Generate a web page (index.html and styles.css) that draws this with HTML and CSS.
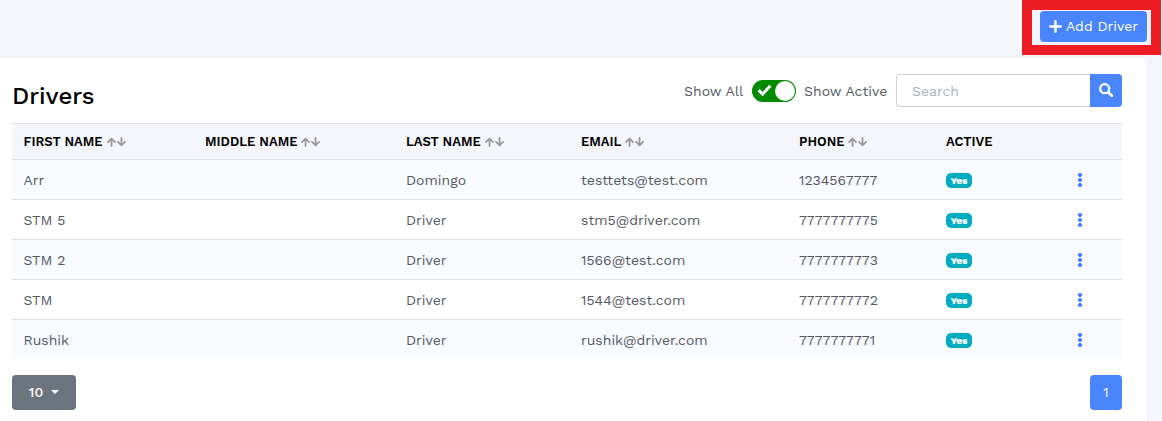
FILE: index.html
```html
<!DOCTYPE html>
<html lang="en">
<head>
<meta charset="utf-8">
<title>Drivers</title>
<link rel="stylesheet" href="styles.css">
</head>
<body>
<svg class="sprite" aria-hidden="true">
  <symbol id="sort" viewBox="0 0 20 10"><path d="M4.500 9V2M1 5.200 4.500 1.700 8 5.200M14.500 1v7M11 4.800l3.500 3.500L18 4.800" fill="none" stroke="#999" stroke-width="1.800" stroke-linecap="round" stroke-linejoin="round"/></symbol>
  <symbol id="dots" viewBox="0 0 4 14"><circle cx="2" cy="2" r="2.100"/><circle cx="2" cy="7" r="2.100"/><circle cx="2" cy="12" r="2.100"/></symbol>
</svg>
<header class="topbar">
  <div class="highlight">
    <button class="add-btn"><svg class="plus" viewBox="0 0 13 13"><path d="M6.500 1.200v10.600M1.200 6.500h10.600" stroke="#fff" stroke-width="2.400" stroke-linecap="round"/></svg><span>Add Driver</span></button>
  </div>
</header>
<main class="card">
  <div class="toolbar">
    <h1>Drivers</h1>
    <div class="controls">
      <span class="show-all">Show All</span>
      <span class="toggle"><svg class="check" viewBox="0 0 14 12"><path d="M1.500 5.700 5.200 9.300 12.500 1.500" fill="none" stroke="#fff" stroke-width="2.800"/></svg><span class="knob"></span></span>
      <span class="show-active">Show Active</span>
      <div class="search">
        <div class="search-input">Search</div>
        <button class="search-btn"><svg class="lens" viewBox="0 0 14 14"><circle cx="5.700" cy="5.700" r="4.500" fill="none" stroke="#fff" stroke-width="2.300"/><path d="m9.200 9.200 3.600 3.600" stroke="#fff" stroke-width="2.700" stroke-linecap="round"/></svg></button>
      </div>
    </div>
  </div>
  <div class="table">
    <div class="row head"><span>FIRST NAME<svg class="sort"><use href="#sort"/></svg></span><span>MIDDLE NAME<svg class="sort"><use href="#sort"/></svg></span><span>LAST NAME<svg class="sort"><use href="#sort"/></svg></span><span>EMAIL<svg class="sort"><use href="#sort"/></svg></span><span>PHONE<svg class="sort"><use href="#sort"/></svg></span><span>ACTIVE</span><span></span></div>
    <div class="row"><span>Arr</span><span></span><span>Domingo</span><span>testtets@test.com</span><span>1234567777</span><span><b class="badge">Yes</b></span><span><svg class="dots"><use href="#dots"/></svg></span></div>
    <div class="row"><span>STM 5</span><span></span><span>Driver</span><span>stm5@driver.com</span><span>7777777775</span><span><b class="badge">Yes</b></span><span><svg class="dots"><use href="#dots"/></svg></span></div>
    <div class="row"><span>STM 2</span><span></span><span>Driver</span><span>1566@test.com</span><span>7777777773</span><span><b class="badge">Yes</b></span><span><svg class="dots"><use href="#dots"/></svg></span></div>
    <div class="row"><span>STM</span><span></span><span>Driver</span><span>1544@test.com</span><span>7777777772</span><span><b class="badge">Yes</b></span><span><svg class="dots"><use href="#dots"/></svg></span></div>
    <div class="row"><span>Rushik</span><span></span><span>Driver</span><span>rushik@driver.com</span><span>7777777771</span><span><b class="badge">Yes</b></span><span><svg class="dots"><use href="#dots"/></svg></span></div>
  </div>
  <div class="footer">
    <button class="size-btn">10<span class="caret"></span></button>
    <button class="page-btn">1</button>
  </div>
</main>
</body>
</html>
```
FILE: styles.css
```css
* { box-sizing: border-box; }
body { margin: 0; height: 421px; overflow: hidden; background: #f5f6fb; color: #54595f; font: 400 14px/20px "Work Sans", Inter, sans-serif; }
button { border: 0; padding: 0 0 2px; margin: 0; font: inherit; color: #fff; display: flex; align-items: center; justify-content: center; }
.sprite { position: absolute; width: 0; height: 0; }
.topbar { height: 58px; padding-right: 1px; display: flex; justify-content: flex-end; align-items: flex-start; }
.highlight { width: 139px; height: 55px; border: 10px solid #ed1c24; padding: 1px 4px 0 8px; }
.add-btn { width: 107px; height: 31px; padding-bottom: 1px; border-radius: 4px; background: #4885ff; gap: 4px; }
.plus { width: 13px; height: 13px; }
.card { width: 1147px; height: 363px; padding: 16px 25px 0 12px; background: #fff; border-radius: 0 5px 0 0; box-shadow: 0 0 4px rgba(40, 50, 90, .04); }
.toolbar { height: 49px; display: flex; justify-content: space-between; align-items: flex-start; }
h1 { margin: 7px 0 0; font-size: 24px; line-height: 30px; font-weight: 500; color: #000; }
.controls { display: flex; align-items: center; height: 33px; }
.show-all { width: 68px; white-space: nowrap; }
.show-active { width: 92px; white-space: nowrap; }
.toggle { width: 44px; height: 22px; margin-right: 8px; padding: 0 1px 0 5px; border-radius: 11px; background: #008a00; display: flex; align-items: center; justify-content: space-between; }
.check { width: 15px; height: 13px; }
.knob { width: 20px; height: 20px; border-radius: 50%; background: #fff; }
.search { display: flex; width: 226px; height: 33px; }
.search-input { flex: 1; padding: 6px 15px; line-height: 20px; border: 1px solid #cfd2da; border-right: 0; border-radius: 4px 0 0 4px; color: #adb3ba; }
.search-btn { width: 32px; background: #4885ff; border-radius: 0 4px 4px 0; }
.lens { width: 14px; height: 14px; }
.table { width: 1110px; }
.row { display: grid; grid-template-columns: 182px 201px 175px 218px 147px 132px 55px; height: 40px; padding-top: 1px; border-top: 1px solid #dee2e6; align-items: center; }
.row > span { padding-left: 11px; display: flex; align-items: center; white-space: nowrap; }
.row > span:first-child { padding-left: 11.5px; }
.row:nth-child(even) { background: #f9fbff; }
.head { height: 36px; padding-top: 0; background: #f5f6fb; color: #000; font-weight: 600; font-size: 13px; }
.sort { width: 20px; height: 10px; margin-left: 4px; }
.badge { width: 26px; height: 15px; border-radius: 5px; background: #00acc1; color: #fff; font-size: 10px; line-height: 15px; font-weight: 800; text-align: center; }
.dots { width: 4px; height: 14px; fill: #4885ff; }
.footer { margin-top: 16px; display: flex; justify-content: space-between; }
.size-btn { width: 64px; height: 35px; border-radius: 4px; background: #6c757d; gap: 8px; font-weight: 500; }
.caret { border: 4px solid transparent; border-top-color: #fff; border-bottom: 0; }
.page-btn { width: 32px; height: 35px; border-radius: 4px; background: #4885ff; }
```
